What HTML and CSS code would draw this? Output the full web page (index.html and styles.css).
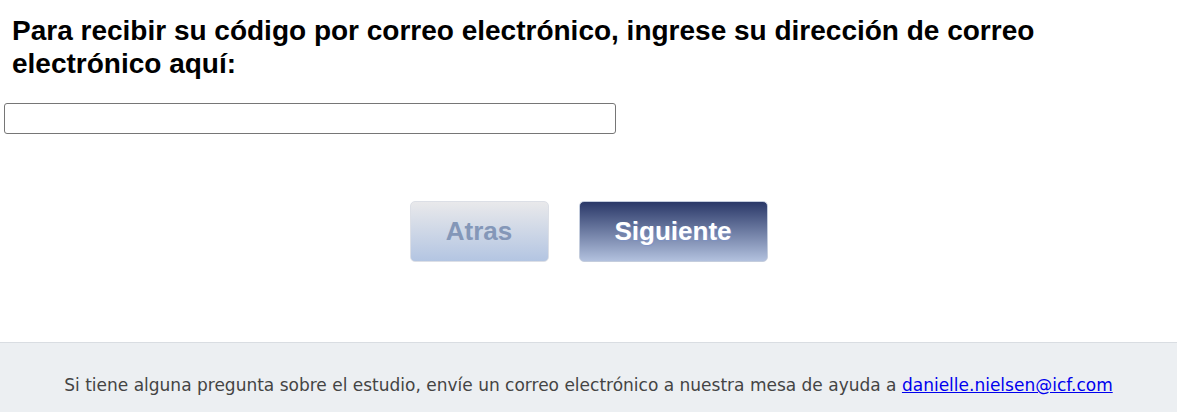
FILE: index.html
```html
<!DOCTYPE html>
<html>
<head>
  <title>Código por correo electrónico</title>
  <link rel="stylesheet" href="styles.css">
</head>
<body>
  <div class="content">
    <h1 class="question">Para recibir su código por correo electrónico, ingrese su dirección de correo electrónico aquí:</h1>

    <input type="text" class="email-input" name="email">

    <div class="nav-buttons">
      <button type="button" class="btn btn-back">Atras</button>
      <button type="submit" class="btn btn-next">Siguiente</button>
    </div>
  </div>

  <footer class="footer">
    Si tiene alguna pregunta sobre el estudio, envíe un correo electrónico a nuestra mesa de ayuda a <a href="mailto:danielle.nielsen@icf.com">danielle.nielsen@icf.com</a>
  </footer>
</body>
</html>
```

FILE: styles.css
```css
body {
  margin: 0;
  font-family: "Liberation Sans", Arial, sans-serif;
  background: #fff;
}

.content {
  padding: 0 4px;
  height: 342px;
}

.question {
  margin: 0;
  padding: 14px 8px 0;
  max-width: 1100px;
  font-size: 28px;
  line-height: 33px;
  font-weight: bold;
  color: #000;
}

.email-input {
  display: block;
  margin-top: 23px;
  width: 612px;
  height: 31px;
  box-sizing: border-box;
  border: 1px solid #767676;
  border-radius: 3px;
  padding: 2px 6px;
  font-size: 16px;
}

.nav-buttons {
  display: flex;
  justify-content: center;
  gap: 30px;
  margin-top: 67px;
}

.btn {
  height: 61px;
  border-radius: 5px;
  font-family: "Liberation Sans", Arial, sans-serif;
  font-size: 26px;
  font-weight: bold;
  cursor: pointer;
}

.btn-back {
  width: 139px;
  border: 1px solid #dcdfe6;
  background: linear-gradient(to bottom, #e9e9eb, #b3c5e2);
  color: #8497b8;
}

.btn-next {
  width: 189px;
  border: 1px solid #c4cddd;
  background: linear-gradient(to bottom, #2a3868, #b2c1de);
  color: #fff;
  text-shadow: 1px 1px 1px #7d92c4;
}

.footer {
  background: #eceff2;
  border-top: 1px solid #d9dde2;
  height: 70px;
  box-sizing: border-box;
  padding-top: 32px;
  text-align: center;
  font-family: "DejaVu Sans", Tahoma, sans-serif;
  font-size: 17px;
  color: #444;
}

.footer a {
  color: #0000ee;
}
```
